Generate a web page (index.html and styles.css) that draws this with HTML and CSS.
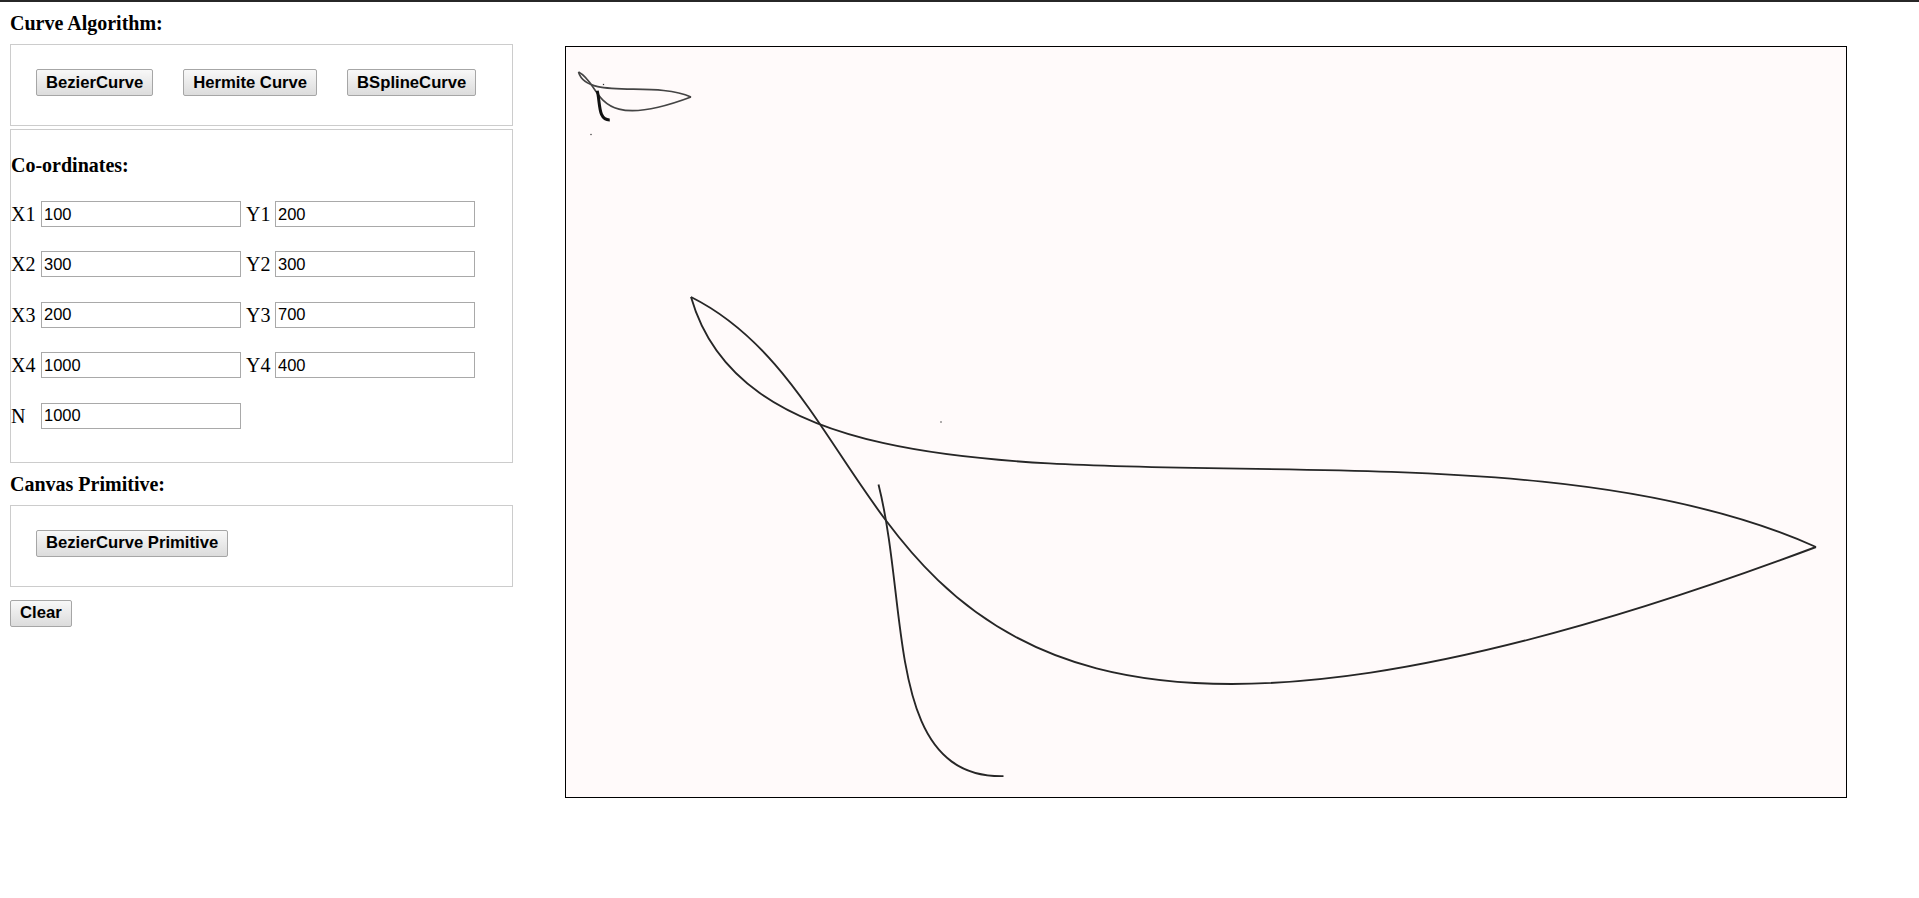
FILE: index.html
```html
<html>
<head>
  <title>Curves</title>
  <link rel="stylesheet" href="styles.css">
</head>
<body>
  <div class="topbar"></div>

  <div class="page">
    <div class="controls">
      <h4 class="caption">Curve Algorithm:</h4>
      <div class="box btns">
        <button>BezierCurve</button>
        <button>Hermite Curve</button>
        <button>BSplineCurve</button>
      </div>

      <div class="box coords">
        <h4 class="caption">Co-ordinates:</h4>
        <div class="row"><label>X1</label><input value="100"><label class="y">Y1</label><input value="200"></div>
        <div class="row"><label>X2</label><input value="300"><label class="y">Y2</label><input value="300"></div>
        <div class="row"><label>X3</label><input value="200"><label class="y">Y3</label><input value="700"></div>
        <div class="row"><label>X4</label><input value="1000"><label class="y">Y4</label><input value="400"></div>
        <div class="row"><label>N</label><input value="1000"></div>
      </div>

      <h4 class="caption primitive">Canvas Primitive:</h4>
      <div class="box btns">
        <button>BezierCurve Primitive</button>
      </div>

      <button class="clear">Clear</button>
    </div>

    <div class="board">
      <svg width="1280" height="750" viewBox="0 0 1024 600">
        <!-- first run, points /10 -->
        <g transform="scale(0.1)" fill="none">
          <path class="thin" d="M100,200 C300,300 200,700 1000,400" />
          <path class="thin" d="M100,200 C166,431 700,265 1000,400" />
          <path class="thick" d="M250,350 C275,450 255,585 350,583.3" />
          <rect class="dot" x="295" y="295" width="10" height="10" />
          <rect class="dot" x="195" y="695" width="10" height="10" />
        </g>
        <!-- second run -->
        <g fill="none">
          <path class="line" d="M100,200 C300,300 200,700 1000,400" />
          <path class="line" d="M100,200 C166,431 700,265 1000,400" />
          <path class="line" d="M250,350 C275,450 255,585 350,583.3" />
          <rect class="dot" x="299.5" y="299.5" width="1" height="1" />
        </g>
      </svg>
    </div>
  </div>
</body>
</html>
```

FILE: styles.css
```css
body { margin:0; font-family:"Liberation Serif", "Times New Roman", serif; font-size:20px; color:#000; background:#fff; }

.topbar { height:2px; background:#272727; }

.page { display:flex; align-items:flex-start; padding:10px; }

.controls { width:503px; flex:none; }

.caption { margin:0; font-size:20px; line-height:23px; font-weight:bold; }
.caption.primitive { margin-top:10px; }

.box { border:1px solid #cccccc; margin-top:9px; }

.btns { display:flex; gap:30px; padding:24px 25px 29px; }

button {
  height:27px;
  padding:0 9px;
  font:bold 16.67px "Liberation Sans", Arial, sans-serif;
  color:#000;
  background:linear-gradient(#f8f8f8, #dcdcdc);
  border:1px solid #a6a6a6;
  border-radius:2px;
}
button.clear { display:block; margin-top:13px; }

.coords { margin-top:3px; padding:24px 0 33px; }
.coords .caption { margin-bottom:24px; }

.row { display:flex; align-items:center; height:26px; margin-bottom:24.4px; }
.row:last-child { margin-bottom:0; }
.row label { width:30px; line-height:26px; }
.row label.y { width:34px; padding-left:5px; box-sizing:border-box; }

input {
  width:200px; height:26px; box-sizing:border-box;
  border:1px solid #a9a9a9; padding:0 2px; margin:0;
  font:16.5px "Liberation Sans", Arial, sans-serif; color:#000;
}

.board { flex:none; margin:34px 0 0 52px; width:1280px; height:750px; border:1px solid #000; background:#fffafa; }
.board svg { display:block; }
.board .line { stroke:#262626; stroke-width:1.5; }
.board .thin { stroke:#444; stroke-width:13; }
.board .thick { stroke:#111; stroke-width:24; }
.board .dot { fill:#333; }
```
